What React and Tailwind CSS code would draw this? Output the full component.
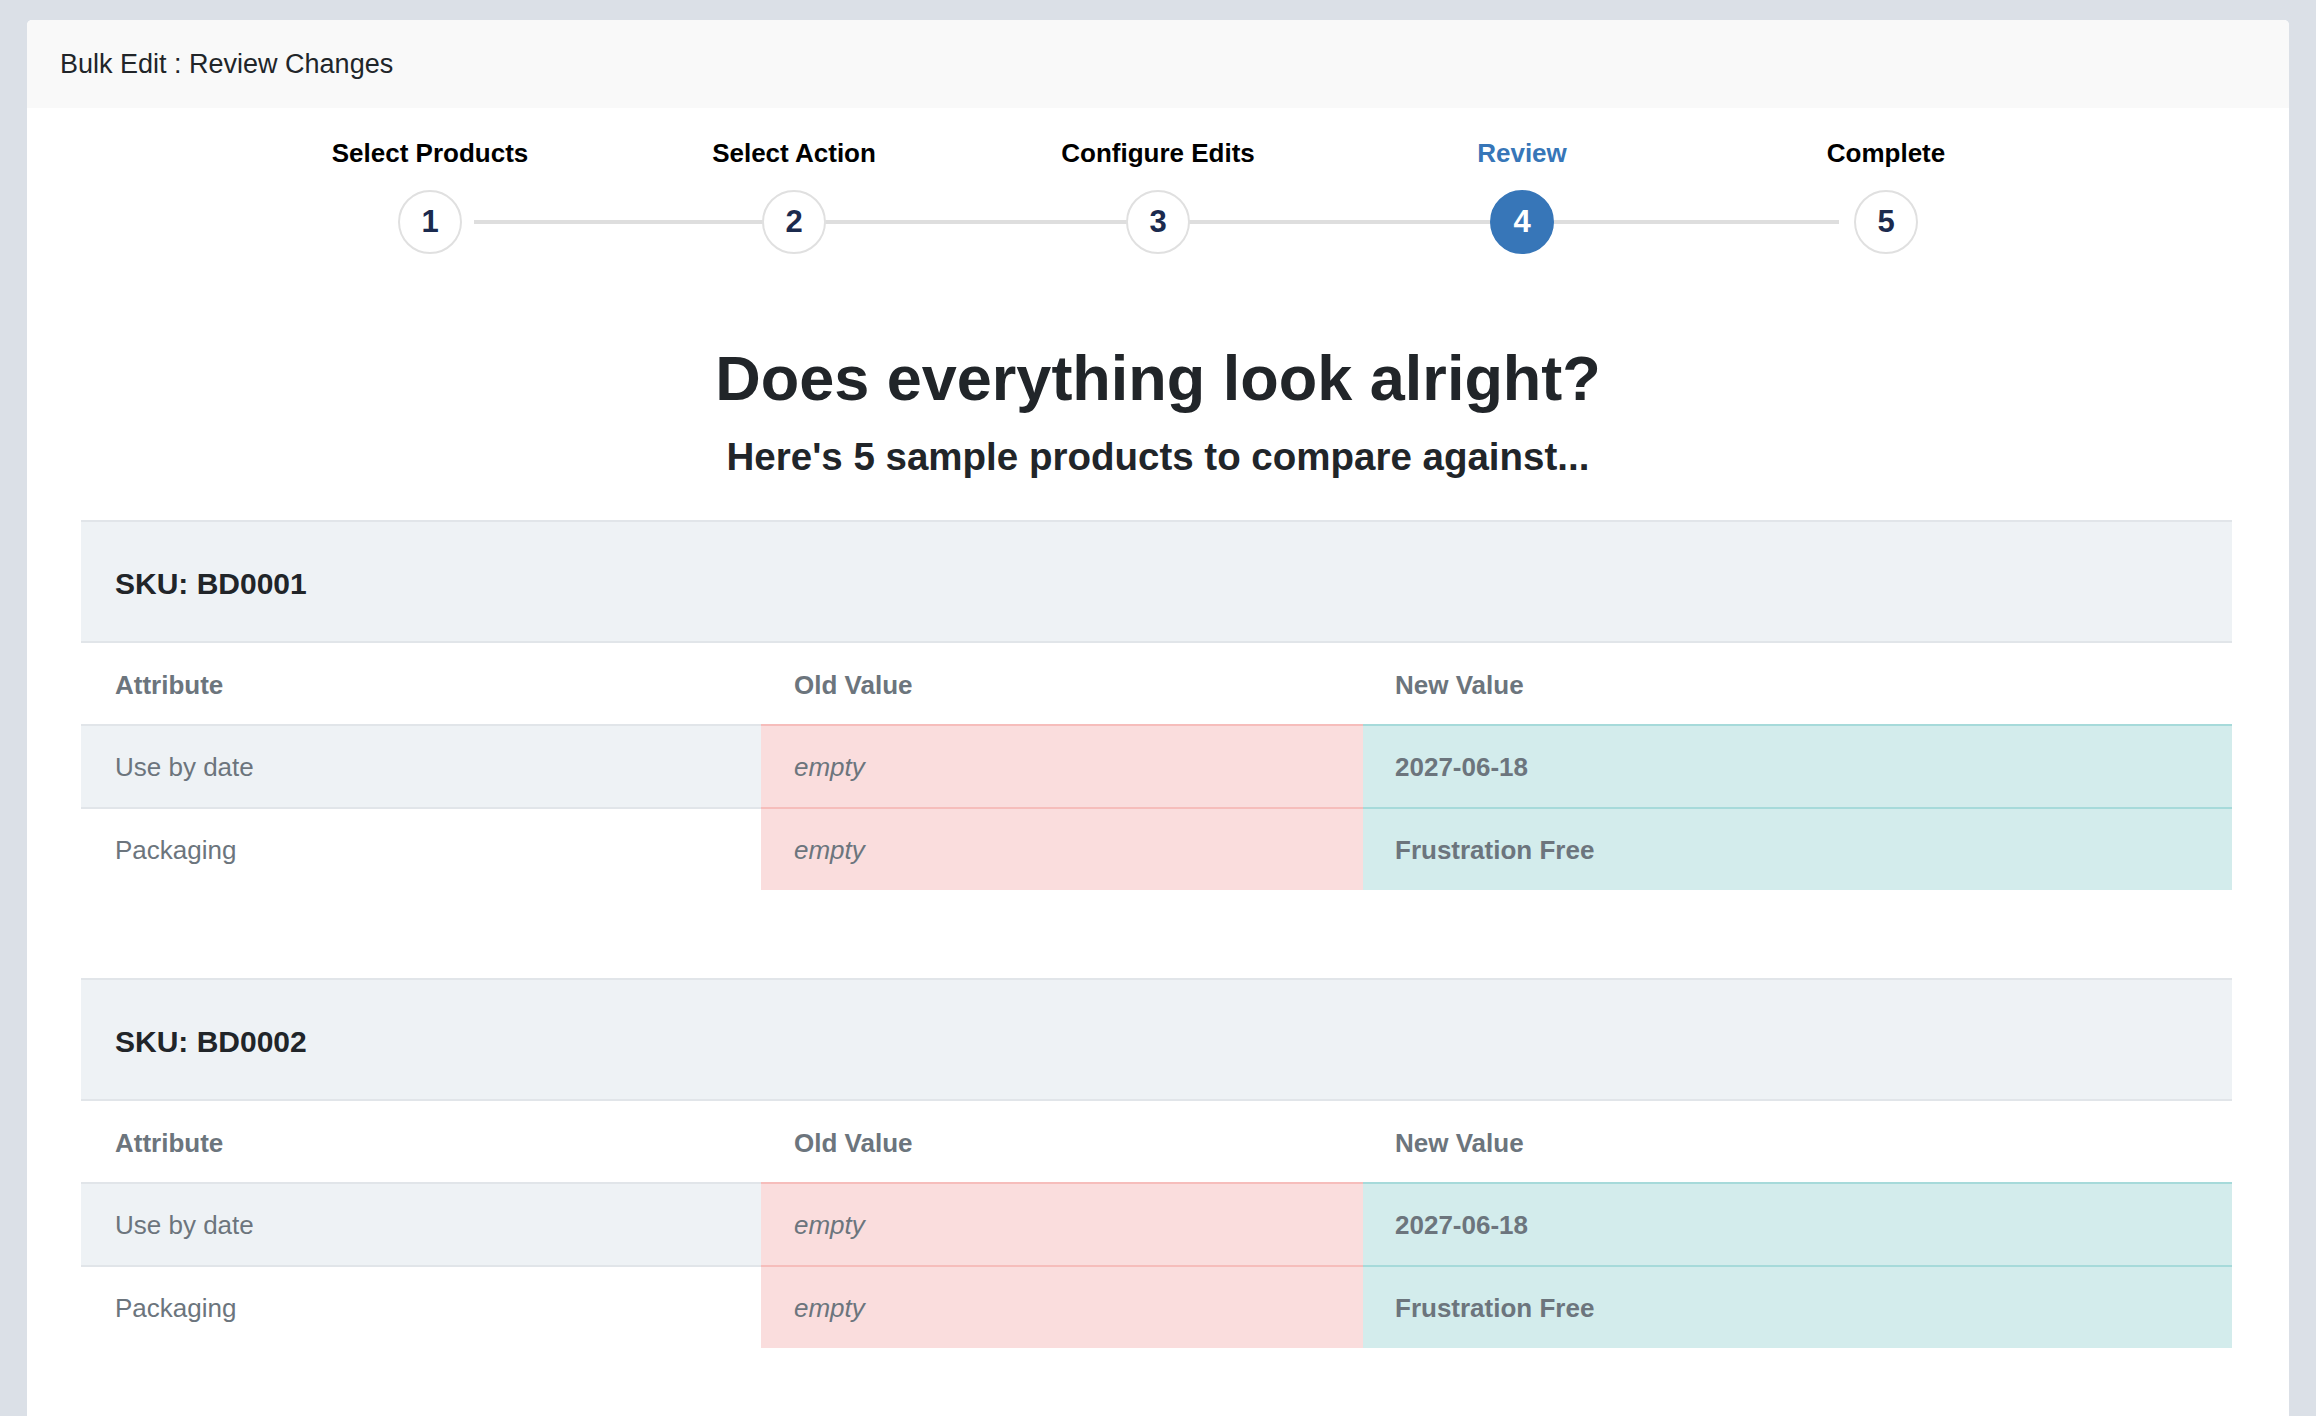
const steps = ["Select Products", "Select Action", "Configure Edits", "Review", "Complete"];
const activeStep = 4;

const samples = [
  {
    sku: "BD0001",
    rows: [
      { attribute: "Use by date", oldValue: "empty", newValue: "2027-06-18" },
      { attribute: "Packaging", oldValue: "empty", newValue: "Frustration Free" },
    ],
  },
  {
    sku: "BD0002",
    rows: [
      { attribute: "Use by date", oldValue: "empty", newValue: "2027-06-18" },
      { attribute: "Packaging", oldValue: "empty", newValue: "Frustration Free" },
    ],
  },
];

function Stepper() {
  return (
    <div className="relative mx-auto grid w-[1820px] grid-cols-5 pt-[30px]">
      {/* connector line sits behind the circles */}
      <div className="absolute left-[226px] right-[229px] top-[112px] h-[4px] bg-[#dedede]" />
      {steps.map((step, i) => {
        const num = i + 1;
        const active = num === activeStep;
        return (
          <div key={step} className="relative flex flex-col items-center">
            <p
              className={`text-[26px] font-bold leading-[30px] ${
                active ? "text-[#3776b8]" : "text-black"
              }`}
            >
              {step}
            </p>
            <div
              className={`mt-[22px] flex h-[64px] w-[64px] items-center justify-center rounded-full border-2 text-[31px] font-bold ${
                active
                  ? "border-[#3776b8] bg-[#3776b8] text-white"
                  : "border-[#e0e0e0] bg-white text-[#1b2a4e]"
              }`}
            >
              {num}
            </div>
          </div>
        );
      })}
    </div>
  );
}

function SampleTable({ sample }) {
  return (
    <div className="flex flex-col">
      <div className="flex h-[123px] items-center border-y-2 border-[#e1e5e9] bg-[#eef2f5] px-[34px] pt-[3px]">
        <h2 className="text-[30px] font-bold text-[#212529]">SKU: {sample.sku}</h2>
      </div>
      <div className="grid grid-cols-[680px_602px_1fr]">
        <div className="flex h-[81px] items-center px-[34px] pt-[3px] text-[26px] font-bold text-[#6c757d]">Attribute</div>
        <div className="flex h-[81px] items-center px-[33px] pt-[3px] text-[26px] font-bold text-[#6c757d]">Old Value</div>
        <div className="flex h-[81px] items-center px-[32px] pt-[3px] text-[26px] font-bold text-[#6c757d]">New Value</div>
        {sample.rows.map((row, i) => (
          <div key={row.attribute} className="contents">
            <div
              className={`flex h-[83px] items-center border-t-2 border-[#e1e5e9] px-[34px] pt-[2px] text-[26px] text-[#6c757d] ${
                i % 2 === 0 ? "bg-[#eef2f5]" : "bg-white"
              }`}
            >
              {row.attribute}
            </div>
            <div className="flex h-[83px] items-center border-t-2 border-[#f6bdbb] bg-[#fadddd] px-[33px] pt-[2px] text-[26px] italic text-[#6c757d]">
              {row.oldValue}
            </div>
            <div className="flex h-[83px] items-center border-t-2 border-[#a6dada] bg-[#d3ecec] px-[32px] pt-[2px] text-[26px] font-bold text-[#6c757d]">
              {row.newValue}
            </div>
          </div>
        ))}
      </div>
    </div>
  );
}

export default function App() {
  return (
    <div className="min-h-screen bg-[#dbe0e7] px-[27px] pt-[20px] font-['Liberation_Sans',Arial,sans-serif]">
      <div className="overflow-hidden rounded-t-[5px] bg-white pb-[100px]">
        <div className="flex h-[88px] items-center bg-[#f9f9f9] px-[33px]">
          <h1 className="text-[27px] text-[#212529]">Bulk Edit : Review Changes</h1>
        </div>

        <Stepper />

        <div className="mt-[86px] flex flex-col items-center text-[#212529]">
          <h1 className="text-[63px] font-bold leading-[76px]">Does everything look alright?</h1>
          <h3 className="mt-[18px] text-[38.5px] font-bold leading-[46px]">
            Here's 5 sample products to compare against...
          </h3>
        </div>

        <div className="mt-[40px] flex flex-col gap-[88px] pl-[54px] pr-[57px]">
          {samples.map((sample) => (
            <SampleTable key={sample.sku} sample={sample} />
          ))}
        </div>
      </div>
    </div>
  );
}
